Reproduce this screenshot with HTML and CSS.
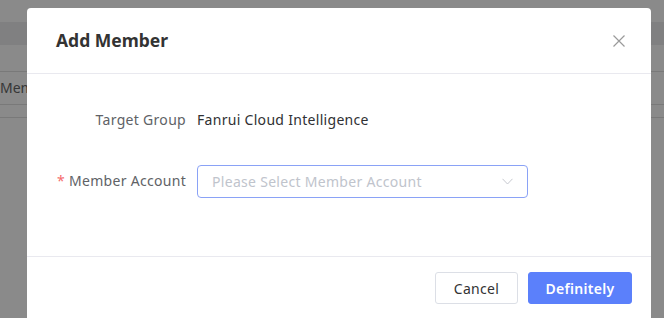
FILE: index.html
```html
<!DOCTYPE html>
<html lang="en">
<head>
  <meta charset="UTF-8" />
  <meta name="viewport" content="width=device-width, initial-scale=1.0"/>
  <title>Add Member</title>
  <link rel="stylesheet" href="styles.css">
</head>
<body>

  <!-- Page behind the dialog -->
  <div class="page">
    <div class="page-top"></div>
    <div class="page-band"></div>
    <div class="page-tabs"></div>
    <div class="page-row">Member</div>
    <div class="page-row short"></div>
  </div>

  <!-- Dialog -->
  <div class="mask">
    <div class="dialog">
      <div class="dialog-header">
        <h2>Add Member</h2>
        <button class="close-btn" aria-label="Close">
          <svg width="12" height="12" viewBox="0 0 12 12">
            <path d="M0.5 0.5 L11.5 11.5 M11.5 0.5 L0.5 11.5" stroke="#9a9a9a" stroke-width="1.2" fill="none"/>
          </svg>
        </button>
      </div>

      <div class="dialog-body">
        <div class="form-item">
          <label class="form-label">Target Group</label>
          <div class="form-value">Fanrui Cloud Intelligence</div>
        </div>
        <div class="form-item">
          <label class="form-label"><span class="required">*</span>Member Account</label>
          <div class="select">
            <span class="placeholder">Please Select Member Account</span>
            <svg class="arrow" width="11" height="7" viewBox="0 0 11 7">
              <path d="M0.5 0.8 L5.5 6 L10.5 0.8" stroke="#c6c8cf" stroke-width="1" fill="none"/>
            </svg>
          </div>
        </div>
      </div>

      <div class="dialog-footer">
        <button class="btn btn-cancel">Cancel</button>
        <button class="btn btn-primary">Definitely</button>
      </div>
    </div>
  </div>

</body>
</html>
```

FILE: styles.css
```css
/* Base Reset */
* {
  margin: 0;
  padding: 0;
  box-sizing: border-box;
}

body {
  font-family: 'Noto Sans', 'Open Sans', sans-serif;
  background: #fff;
  width: 664px;
  height: 318px;
  overflow: hidden;
}

/* Background page */
.page-top {
  height: 22px;
}

.page-band {
  height: 23px;
  background: #ededee;
}

.page-tabs {
  height: 27px;
  border-bottom: 1px solid #e0e0e0;
}

.page-row {
  height: 33px;
  border-bottom: 1px solid #e0e0e0;
  font-size: 14px;
  line-height: 32px;
  color: #666;
}

.page-row.short {
  height: 13px;
}

/* Mask + dialog */
.mask {
  position: fixed;
  inset: 0;
  background: rgba(0, 0, 0, 0.46);
}

.dialog {
  position: absolute;
  left: 27px;
  top: 8px;
  width: 624px;
  height: 330px;
  background: #fff;
  border-radius: 4px;
}

.dialog-header {
  height: 66px;
  padding: 0 26px 0 29px;
  display: flex;
  align-items: center;
  justify-content: space-between;
  border-bottom: 1px solid #e9e9ef;
}

.dialog-header h2 {
  font-size: 17.5px;
  font-weight: 700;
  color: #333;
  margin-top: -1px;
}

.close-btn {
  background: none;
  border: none;
  width: 12px;
  height: 12px;
  display: flex;
  cursor: pointer;
}

/* Form */
.dialog-body {
  height: 182px;
  padding: 30px 30px 0 27px;
  display: flex;
  flex-direction: column;
  gap: 29px;
}

.form-item {
  display: flex;
  align-items: center;
  height: 32px;
  letter-spacing: 0.3px;
}

.form-label {
  flex-shrink: 0;
  width: 143px;
  padding-right: 11px;
  text-align: right;
  white-space: nowrap;
  font-size: 14px;
  color: #606266;
  margin-top: -1px;
}

.required {
  color: #f56c6c;
  margin-right: 4px;
}

.form-value {
  font-size: 14px;
  color: #303133;
  margin-top: -1px;
}

.select {
  width: 331px;
  height: 33px;
  border: 1px solid #8aa2f6;
  border-radius: 4px;
  padding: 0 14px;
  display: flex;
  align-items: center;
  justify-content: space-between;
}

.placeholder {
  font-size: 14px;
  color: #c0c4cc;
}

/* Footer */
.dialog-footer {
  border-top: 1px solid #e9e9ef;
  padding: 15px 19px 0 0;
  display: flex;
  justify-content: flex-end;
  gap: 10px;
}

.btn {
  height: 32px;
  border-radius: 3px;
  font-family: inherit;
  font-size: 14px;
  letter-spacing: 0.3px;
  cursor: pointer;
}

.btn-cancel {
  width: 83px;
  background: #fff;
  border: 1px solid #dcdfe6;
  color: #333;
}

.btn-primary {
  width: 104px;
  background: #5b80fb;
  border: 1px solid #5b80fb;
  color: #fff;
  font-weight: 600;
}
```
